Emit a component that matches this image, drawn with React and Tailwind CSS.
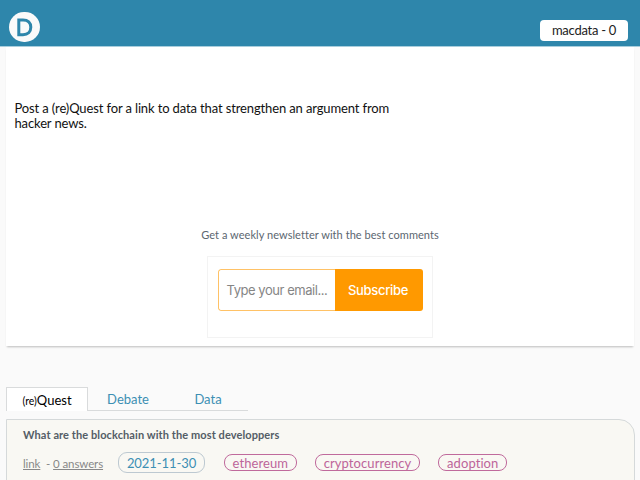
function Header() {
  return (
    <header className="flex h-[47px] shrink-0 items-start justify-between border-b border-[#a9cedd] bg-[#2e86ab] pr-3 pl-[8.5px]">
      <div className="mt-3 flex h-[30px] w-[31.5px] items-center justify-center rounded-full bg-[#fafafa]">
        <svg width="18" height="20" viewBox="0 0 18 20" className="ml-[2px]">
          <path
            d="M2.8 2.9h4.2c4.9 0 7.8 3 7.8 7.4s-2.9 7.4-7.8 7.4H2.8z"
            fill="none"
            stroke="#2e86ab"
            strokeWidth="3"
          />
        </svg>
      </div>
      <div className="mt-5 flex h-[21px] w-[88px] items-center justify-center rounded-[4px] bg-white text-[13px] leading-none tracking-[-0.26px] text-[#222]">
        macdata - 0
      </div>
    </header>
  );
}

function Newsletter() {
  return (
    <div className="mt-[13px] flex h-[82px] w-[226px] items-start self-center border border-[#f3f3f3] px-[9.5px] pt-3">
      <div className="flex h-[42px] w-[205px] overflow-hidden rounded-[3px] font-['Inter',sans-serif] text-[13px]">
        <div className="flex w-[117px] items-center rounded-l-[3px] border-[1.5px] border-r-0 border-[#ffc266] pt-[3px] pl-2 tracking-[-0.45px] whitespace-nowrap text-[#858585]">
          Type your email...
        </div>
        <div className="flex flex-1 items-center justify-center bg-[#ff9900] pt-[3px] pr-px font-medium tracking-[-0.3px] text-white">
          Subscribe
        </div>
      </div>
    </div>
  );
}

function Tabs() {
  return (
    <nav className="mt-[41px] ml-[6px] flex h-[24px] w-[242px] text-[13px] leading-[24px] text-[#3c8fb3]">
      <div className="w-[82px] border border-b-0 border-[#d9dbdc] bg-white text-center text-black">
        <span className="text-[10.5px]">(re)</span>Quest
      </div>
      <div className="w-[80px] border-b border-[#d9dbdc] text-center">Debate</div>
      <div className="w-[80px] border-b border-[#d9dbdc] text-center">Data</div>
    </nav>
  );
}

function Tag({ children }) {
  return (
    <span className="flex h-[17px] items-center rounded-[8px] border border-[#c06a9c] px-2 pt-[2px] text-[13px] leading-none text-[#bd659a]">
      {children}
    </span>
  );
}

function Question() {
  return (
    <article className="mt-[8px] ml-[6px] h-[80px] w-[629px] shrink-0 rounded-tr-[16px] border border-[#d5d9da] bg-[#f9f8f3] pl-4">
      <h2 className="mt-[7px] text-[11px] leading-[16px] font-bold tracking-[0.09px] text-[#545d66]">
        What are the blockchain with the most developpers
      </h2>
      <div className="mt-[9px] flex h-[21px] items-center text-[#888]">
        <div className="w-[95px] pt-[3px] text-[11.5px] tracking-[-0.1px] whitespace-pre">
          <span className="underline">link</span>
          {"  - "}
          <span className="underline">0 answers</span>
        </div>
        <span className="flex h-[21px] w-[87px] items-center justify-center rounded-[9px] border border-[#bdc9d1] pt-[2px] text-[13px] leading-none tracking-[-0.08px] text-[#3c8fb3]">
          2021-11-30
        </span>
        <div className="ml-[18.5px] flex gap-[17.7px] tracking-[0.08px]">
          <Tag>ethereum</Tag>
          <Tag>cryptocurrency</Tag>
          <Tag>adoption</Tag>
        </div>
      </div>
    </article>
  );
}

export default function App() {
  return (
    <div className="flex h-[480px] w-[640px] flex-col overflow-hidden bg-[#fafafa] font-['Lato',sans-serif] [font-variant-ligatures:none]">
      <Header />
      <main className="mx-[6px] flex h-[298.5px] shrink-0 flex-col bg-white shadow-[0_2px_2px_-1px_rgba(0,0,0,0.25)]">
        <p className="mt-[53.5px] ml-[8.5px] w-[385px] text-[13px] leading-[15.5px] tracking-[-0.13px] text-[#111]">
          Post a (re)Quest for a link to data that strengthen an argument from hacker news.
        </p>
        <p className="mt-[95px] text-center text-[11px] leading-[16px] tracking-[0.05px] text-[#5b6670]">
          Get a weekly newsletter with the best comments
        </p>
        <Newsletter />
      </main>
      <Tabs />
      <Question />
    </div>
  );
}
